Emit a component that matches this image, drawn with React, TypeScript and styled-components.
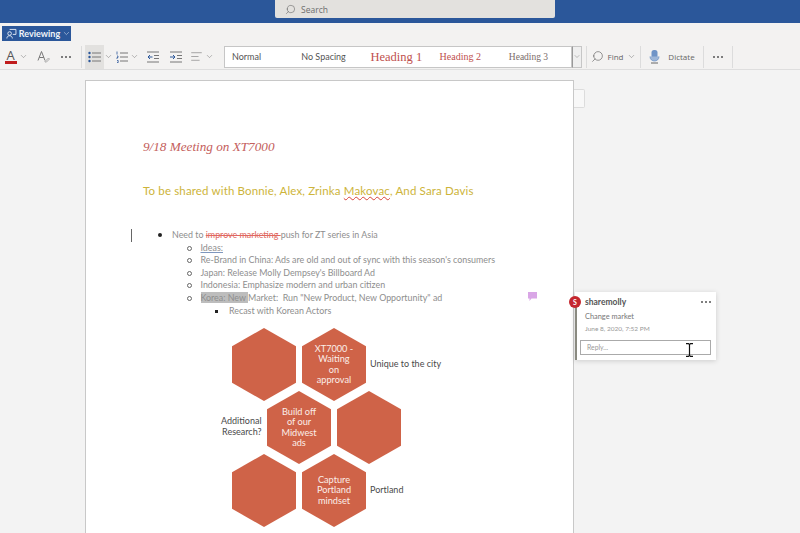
import React, { FC, ReactNode } from "react";
import styled, { createGlobalStyle } from "styled-components";
import { ChevronDown, AlignLeft, Search } from "lucide-react";

const GlobalStyle = createGlobalStyle`
  html, body {
    margin: 0;
    padding: 0;
    height: 533px;
    overflow: hidden;
    background: #f3f3f3;
    font-family: "Lato", "Open Sans", sans-serif;
  }
`;

const Shell = styled.div`
  position: relative;
  width: 800px;
  height: 533px;
  overflow: hidden;
  display: flex;
  flex-direction: column;
`;

const TitleBar = styled.div`
  height: 23px;
  background: #2b579a;
  display: flex;
  padding-left: 275px;
  flex-shrink: 0;
`;

const SearchBox = styled.div`
  width: 280px;
  height: 18px;
  background: #e3e1de;
  border-radius: 0 0 2px 2px;
  display: flex;
  align-items: center;
  gap: 5px;
  padding-left: 10px;
  box-sizing: border-box;
  color: #6d6d6d;
  font-family: "Open Sans", sans-serif;
  font-size: 8.5px;
`;

const Ribbon = styled.div`
  height: 43px;
  background: #f3f2f1;
  border-bottom: 1px solid #dedede;
  flex-shrink: 0;
  padding-top: 3px;
`;

const ModeButton = styled.div`
  margin-left: 2px;
  width: 69px;
  height: 15px;
  background: #2b579a;
  color: #f1f4f9;
  display: flex;
  align-items: center;
  gap: 2px;
  padding-left: 4px;
  box-sizing: border-box;
  font-size: 9px;
  font-weight: 700;
`;

const ToolRow = styled.div`
  margin-top: 3px;
  height: 25px;
  display: flex;
  align-items: center;
`;

const Tool = styled.div<{ $w: number; $active?: boolean; $gap?: number }>`
  width: ${(p) => p.$w}px;
  height: 24px;
  flex-shrink: 0;
  display: flex;
  align-items: center;
  justify-content: center;
  gap: ${(p) => p.$gap ?? 2}px;
  color: #666;
  font-size: 8px;
  font-family: "Open Sans", sans-serif;
  background: ${(p) => (p.$active ? "#e2e1df" : "transparent")};
`;

const Sep = styled.div<{ $gap?: number }>`
  width: 1px;
  height: 22px;
  background: #dcdcdc;
  flex-shrink: 0;
  margin: 0 ${(p) => p.$gap ?? 0}px;
`;

const FontColor = styled.span`
  display: inline-block;
  width: 12px;
  text-align: center;
  font-size: 13px;
  line-height: 12px;
  color: #555;
  border-bottom: 3px solid #c01c1c;
`;

const Dots = styled.span`
  display: inline-flex;
  gap: 2px;
  i {
    display: block;
    width: 2px;
    height: 2px;
    border-radius: 50%;
    background: #555;
  }
`;

const Gallery = styled.div`
  display: flex;
  width: 348px;
  height: 22px;
  background: #fff;
  border: 1px solid #c6c6c6;
  box-sizing: border-box;
  flex-shrink: 0;
`;

const StyleSample = styled.div<{ $size: number; $color: string; $serif?: boolean }>`
  width: 69.4px;
  padding-left: 7px;
  box-sizing: border-box;
  line-height: 20px;
  white-space: nowrap;
  font-size: ${(p) => p.$size}px;
  color: ${(p) => p.$color};
  font-family: ${(p) => (p.$serif ? '"Liberation Serif", serif' : '"Lato", sans-serif')};
`;

const GalleryMore = styled.div`
  width: 10px;
  height: 22px;
  border: 1px solid #c6c6c6;
  border-left-color: #999;
  background: #efefef;
  box-sizing: border-box;
  display: flex;
  align-items: center;
  justify-content: center;
  color: #666;
  flex-shrink: 0;
`;

const Canvas = styled.div`
  flex: 1;
  background: #f3f3f3;
  display: flex;
  padding: 10px 0 0 85px;
  min-height: 0;
`;

const Page = styled.div`
  width: 489px;
  height: 470px;
  box-sizing: border-box;
  background: #fff;
  border: 1px solid #c8c8c8;
  flex-shrink: 0;
  position: relative;
  padding: 56px 0 0 57px;
`;

const SideTab = styled.div`
  width: 11px;
  height: 19px;
  margin-top: 9px;
  background: #f8f8f8;
  border: 1px solid #dcdcdc;
  border-left: none;
  box-sizing: border-box;
  border-radius: 0 2px 2px 0;
`;

const DocTitle = styled.div`
  font-family: "Liberation Serif", serif;
  font-style: italic;
  font-size: 13.2px;
  line-height: 20px;
  color: #c4605c;
`;

const DocSubtitle = styled.div`
  margin-top: 24px;
  font-size: 11.5px;
  line-height: 20px;
  letter-spacing: 0.15px;
  color: #cdb43a;
`;

const Misspelled = styled.span`
  text-decoration: underline wavy #d8433a 1px;
`;

const Bullets = styled.ul<{ $indent: number; $kind: string }>`
  margin: 0;
  padding: 0 0 0 ${(p) => p.$indent}px;
  list-style: none;
  font-size: 8.9px;
  line-height: 12.6px;
  color: #8e8e8e;
  li {
    position: relative;
    white-space: nowrap;
  }
  > li::before {
    content: "";
    position: absolute;
    box-sizing: border-box;
    ${(p) =>
      p.$kind === "disc"
        ? "left: -14px; top: 4px; width: 4px; height: 4px; border-radius: 50%; background: #222;"
        : p.$kind === "circle"
        ? "left: -14px; top: 4px; width: 5px; height: 5px; border-radius: 50%; border: 1px solid #666;"
        : "left: -14px; top: 5px; width: 3px; height: 3px; background: #222;"}
  }
`;

const TopList = styled(Bullets)`
  margin-top: 28px;
`;

const Struck = styled.span`
  color: #e0685f;
  text-decoration: line-through;
`;

const LinkedText = styled.span`
  text-decoration: underline;
  text-decoration-color: #7f97bd;
`;

const Selected = styled.span`
  background: #bdbdbd;
`;

const Caret = styled.div`
  position: absolute;
  left: 45px;
  top: 148px;
  width: 1px;
  height: 13px;
  background: #666;
`;

const CommentMark = styled.div`
  position: absolute;
  left: 442px;
  top: 211px;
  line-height: 0;
`;

const Diagram = styled.div`
  position: absolute;
  left: 0;
  top: 0;
`;

const Hex = styled.div<{ $x: number; $y: number }>`
  position: absolute;
  left: ${(p) => p.$x}px;
  top: ${(p) => p.$y}px;
  width: 64px;
  height: 73px;
  background: #cf6348;
  clip-path: polygon(50% 0, 100% 25%, 100% 75%, 50% 100%, 0 75%, 0 25%);
  display: flex;
  align-items: center;
  justify-content: center;
  text-align: center;
  color: #fbeee9;
  font-size: 9.2px;
  line-height: 10.5px;
`;

const HexLabel = styled.div<{ $x: number; $y: number; $right?: boolean }>`
  position: absolute;
  left: ${(p) => p.$x}px;
  top: ${(p) => p.$y}px;
  font-size: 9px;
  line-height: 10.5px;
  color: #4a4a4a;
  white-space: nowrap;
  text-align: ${(p) => (p.$right ? "right" : "left")};
`;

const CommentCard = styled.div`
  position: absolute;
  left: 575px;
  top: 292px;
  width: 141px;
  height: 68px;
  background: #fff;
  box-shadow: 0 1px 5px rgba(0, 0, 0, 0.16);
  box-sizing: border-box;
  padding: 4px 5px 0 10px;
  &::before {
    content: "";
    position: absolute;
    left: 0;
    top: 8px;
    bottom: 0;
    width: 2px;
    background: #8a8a80;
  }
`;

const Avatar = styled.div`
  position: absolute;
  left: -6px;
  top: 4px;
  width: 12px;
  height: 12px;
  border-radius: 50%;
  background: #c4262e;
  color: #fff;
  font-size: 7px;
  font-weight: 700;
  display: flex;
  align-items: center;
  justify-content: center;
`;

const CommentHead = styled.div`
  display: flex;
  justify-content: space-between;
  align-items: center;
  font-size: 8.5px;
  font-weight: 700;
  color: #555;
  height: 11px;
`;

const CommentBody = styled.div`
  margin-top: 4px;
  font-size: 7.4px;
  line-height: 12px;
  color: #777;
`;

const CommentDate = styled.div`
  font-size: 6.5px;
  line-height: 12px;
  color: #999;
`;

const ReplyBox = styled.div`
  margin: 5px 0 0 -5px;
  width: 131px;
  height: 15px;
  border: 1px solid #aaa;
  box-sizing: border-box;
  font-size: 6.8px;
  line-height: 13px;
  padding-left: 6px;
  color: #999;
`;

const BeamCursor = styled.svg`
  position: absolute;
  left: 685px;
  top: 343px;
`;

const Chev: FC<{ size?: number }> = ({ size = 9 }) => <ChevronDown size={size} strokeWidth={1.2} color="#666" />;

const ThreeDots: FC = () => (
  <Dots>
    <i />
    <i />
    <i />
  </Dots>
);

const ReviewIcon: FC = () => (
  <svg width="11" height="11" viewBox="0 0 12 12" fill="none" stroke="#e8eef7" strokeWidth="1">
    <path d="M4 1.500h7v5.500H7.500" />
    <circle cx="4" cy="6" r="2" />
    <path d="M1 11.500c0-2 1.300-3 3-3s3 1 3 3" />
  </svg>
);

const ClearStyleIcon: FC = () => (
  <svg width="13" height="13" viewBox="0 0 13 13" fill="none" stroke="#777" strokeWidth="1">
    <path d="M1 10.500 4.500 1.500 8 10.500M2.300 7.500h4.400" />
    <path d="M8 11.500l3.500-3.500 1 1-3 3H8z" stroke="#a9a9a9" />
  </svg>
);

const BulletsIcon: FC = () => (
  <svg width="13" height="12" viewBox="0 0 13 12" fill="none">
    <circle cx="1.500" cy="2" r="1.200" fill="#2b579a" />
    <circle cx="1.500" cy="6" r="1.200" fill="#2b579a" />
    <circle cx="1.500" cy="10" r="1.200" fill="#2b579a" />
    <path d="M4 2h9M4 6h9M4 10h9" stroke="#777" />
  </svg>
);

const NumberedIcon: FC = () => (
  <svg width="12" height="12" viewBox="0 0 12 12" fill="none">
    <path d="M1 .5v3M1 5h1v1.500H1V8M1 9.500h1.200v2H1" stroke="#2b579a" strokeWidth=".8" />
    <path d="M4 2h8M4 6h8M4 10h8" stroke="#777" />
  </svg>
);

// ribbon indent buttons: full-width rules top and bottom, short rules beside a blue arrow
const IndentIcon: FC<{ $in?: boolean }> = ({ $in }) => (
  <svg width="12" height="12" viewBox="0 0 12 12" fill="none">
    <path d="M0 1h12M0 11h12M7 4.500h5M7 7.500h5" stroke="#777" />
    <path
      d={$in ? "M0 6h4.500M3 4l2 2-2 2" : "M5.500 6H1M3 4 1 6l2 2"}
      stroke="#2b579a"
      strokeWidth="1"
    />
  </svg>
);

const MicIcon: FC = () => (
  <svg width="11" height="14" viewBox="0 0 11 14">
    <rect x="2.500" y="0" width="6" height="9" rx="2.500" fill="#6f94c7" />
    <path d="M1 6.500c0 6 9 6 9 0" fill="#9db6d8" stroke="#6f94c7" strokeWidth=".8" />
    <path d="M2 13h7" stroke="#666" strokeWidth="1" />
  </svg>
);

const CommentGlyph: FC = () => (
  <svg width="10" height="10" viewBox="0 0 10 10">
    <path d="M0 0h9v6.500H3.500L1.500 9V6.500H0z" fill="#d9a6e6" />
  </svg>
);

const sampleStyles: { label: string; size: number; color: string; serif?: boolean }[] = [
  { label: "Normal", size: 9, color: "#555" },
  { label: "No Spacing", size: 9, color: "#555" },
  { label: "Heading 1", size: 12.5, color: "#c0504d", serif: true },
  { label: "Heading 2", size: 10, color: "#c0504d", serif: true },
  { label: "Heading 3", size: 9.5, color: "#7b6d6a", serif: true },
];

const hexes: { x: number; y: number; text?: ReactNode }[] = [
  { x: 146, y: 247 },
  { x: 216, y: 247, text: <>XT7000 -<br />Waiting<br />on<br />approval</> },
  { x: 181, y: 310, text: <>Build off<br />of our<br />Midwest<br />ads</> },
  { x: 251, y: 310 },
  { x: 146, y: 373 },
  { x: 216, y: 373, text: <>Capture<br />Portland<br />mindset</> },
];

export default function App() {
  return (
    <Shell>
      <GlobalStyle />
      <TitleBar>
        <SearchBox>
          <Search size={11} strokeWidth={1.1} color="#555" style={{ transform: "scaleX(-1)" }} />
          Search
        </SearchBox>
      </TitleBar>
      <Ribbon>
        <ModeButton>
          <ReviewIcon />
          Reviewing
          <ChevronDown size={9} strokeWidth={1.4} color="#dfe7f3" />
        </ModeButton>
        <ToolRow>
          <Tool $w={32}>
            <FontColor>A</FontColor>
            <Chev />
          </Tool>
          <Tool $w={22}>
            <ClearStyleIcon />
          </Tool>
          <Tool $w={24}>
            <ThreeDots />
          </Tool>
          <Sep $gap={3} />
          <Tool $w={19} $active>
            <BulletsIcon />
          </Tool>
          <Tool $w={9}>
            <Chev />
          </Tool>
          <Tool $w={28}>
            <NumberedIcon />
            <Chev />
          </Tool>
          <Tool $w={23}>
            <IndentIcon />
          </Tool>
          <Tool $w={24}>
            <IndentIcon $in />
          </Tool>
          <Tool $w={28}>
            <AlignLeft size={13} strokeWidth={1} color="#666" />
            <Chev />
          </Tool>
          <Tool $w={8} />
          <Gallery>
            {sampleStyles.map((s) => (
              <StyleSample key={s.label} $size={s.size} $color={s.color} $serif={s.serif}>
                {s.label}
              </StyleSample>
            ))}
          </Gallery>
          <GalleryMore>
            <Chev />
          </GalleryMore>
          <Tool $w={4} />
          <Sep />
          <Tool $w={53} $gap={4}>
            <Search size={13} strokeWidth={1.1} color="#555" style={{ transform: "scaleX(-1)" }} />
            Find
            <Chev />
          </Tool>
          <Sep />
          <Tool $w={62}>
            <MicIcon />
            <span style={{ marginLeft: 6 }}>Dictate</span>
          </Tool>
          <Sep />
          <Tool $w={28}>
            <ThreeDots />
          </Tool>
          <Sep />
        </ToolRow>
      </Ribbon>
      <Canvas>
        <Page>
          <DocTitle>9/18 Meeting on XT7000</DocTitle>
          <DocSubtitle>
            To be shared with Bonnie, Alex, Zrinka <Misspelled>Makovac</Misspelled>, And Sara Davis
          </DocSubtitle>
          <TopList $indent={29} $kind="disc">
            <li>
              Need to <Struck>improve marketing </Struck>push for ZT series in Asia
              <Bullets $indent={28.5} $kind="circle">
                <li>
                  <LinkedText>Ideas:</LinkedText>
                </li>
                <li>Re-Brand in China: Ads are old and out of sync with this season's consumers</li>
                <li>Japan: Release Molly Dempsey's Billboard Ad</li>
                <li>Indonesia: Emphasize modern and urban citizen</li>
                <li>
                  <Selected>Korea: New </Selected>Market:&nbsp; Run "New Product, New Opportunity" ad
                  <Bullets $indent={28.5} $kind="square">
                    <li>Recast with Korean Actors</li>
                  </Bullets>
                </li>
              </Bullets>
            </li>
          </TopList>
          <Caret />
          <CommentMark>
            <CommentGlyph />
          </CommentMark>
          <Diagram>
            {hexes.map((h) => (
              <Hex key={`${h.x}-${h.y}`} $x={h.x} $y={h.y}>
                {h.text && <span>{h.text}</span>}
              </Hex>
            ))}
            <HexLabel $x={284} $y={278}>Unique to the city</HexLabel>
            <HexLabel $x={135} $y={335} $right>
              Additional
              <br />
              Research?
            </HexLabel>
            <HexLabel $x={284} $y={404}>Portland</HexLabel>
          </Diagram>
        </Page>
        <SideTab />
      </Canvas>
      <CommentCard>
        <Avatar>S</Avatar>
        <CommentHead>
          sharemolly
          <ThreeDots />
        </CommentHead>
        <CommentBody>Change market</CommentBody>
        <CommentDate>June 8, 2020, 7:52 PM</CommentDate>
        <ReplyBox>Reply...</ReplyBox>
      </CommentCard>
      <BeamCursor width="9" height="14" viewBox="0 0 9 14" fill="none" stroke="#111" strokeWidth="1.2">
        <path d="M1 .7h2.500L4.500 1.700 5.500.7H8M4.500 1.700v10.600M1 13.300h2.500l1-1 1 1H8" />
      </BeamCursor>
    </Shell>
  );
}
